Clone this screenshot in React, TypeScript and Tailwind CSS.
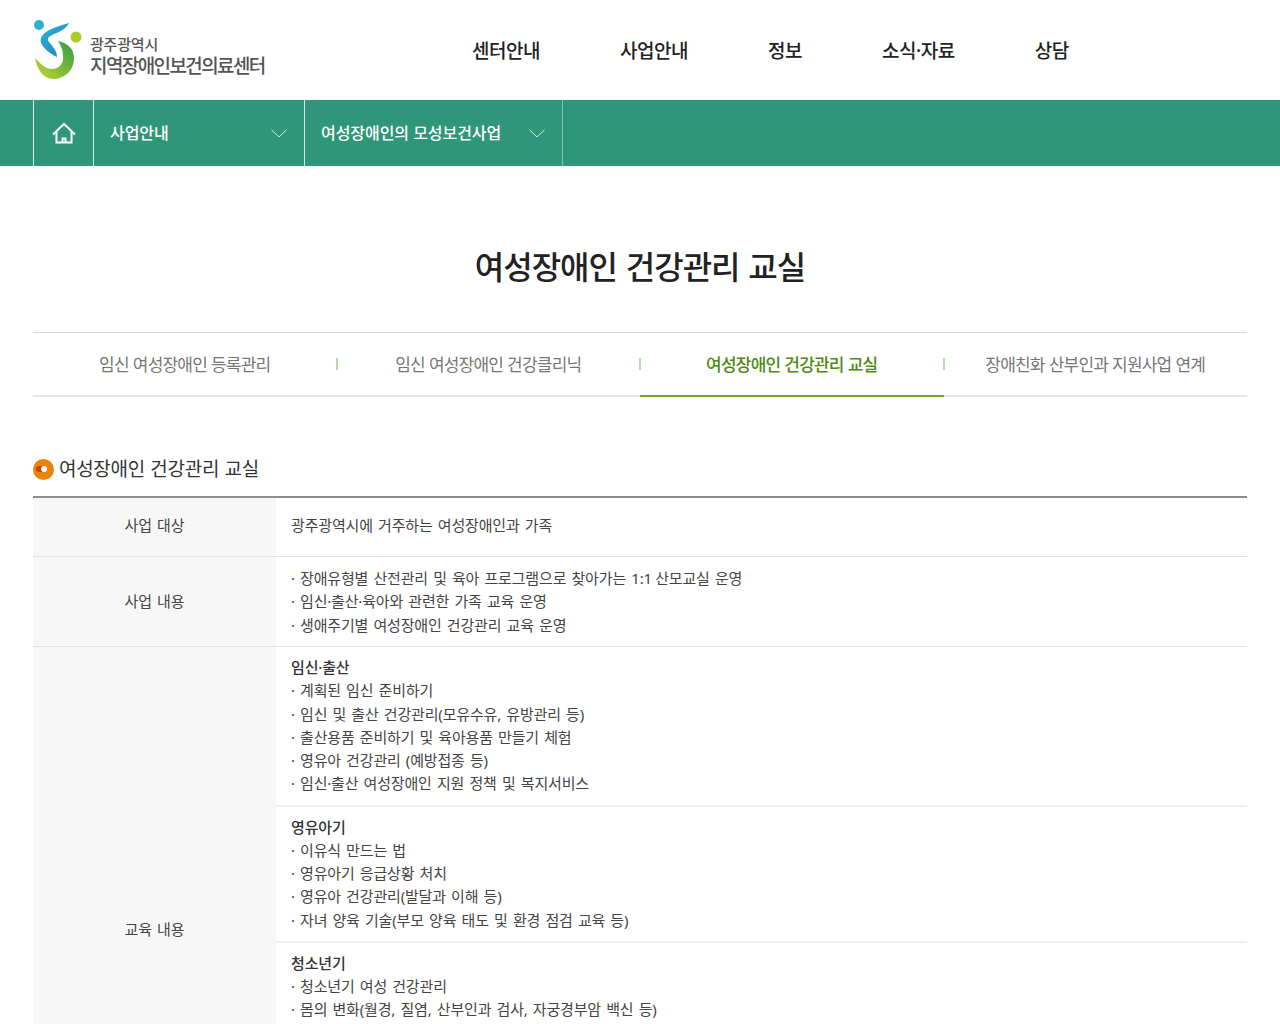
import type { ReactNode } from "react";

const FONT = "font-['Noto_Sans','Noto_Sans_CJK_KR',sans-serif]";

const MENU = ["센터안내", "사업안내", "정보", "소식·자료", "상담"];

const TABS = [
  { label: "임신 여성장애인 등록관리" },
  { label: "임신 여성장애인 건강클리닉" },
  { label: "여성장애인 건강관리 교실", active: true },
  { label: "장애친화 산부인과 지원사업 연계" },
];

const EDU = [
  {
    title: "임신·출산",
    items: [
      "계획된 임신 준비하기",
      "임신 및 출산 건강관리(모유수유, 유방관리 등)",
      "출산용품 준비하기 및 육아용품 만들기 체험",
      "영유아 건강관리 (예방접종 등)",
      "임신·출산 여성장애인 지원 정책 및 복지서비스",
    ],
  },
  {
    title: "영유아기",
    items: [
      "이유식 만드는 법",
      "영유아기 응급상황 처치",
      "영유아 건강관리(발달과 이해 등)",
      "자녀 양육 기술(부모 양육 태도 및 환경 점검 교육 등)",
    ],
  },
  {
    title: "청소년기",
    items: ["청소년기 여성 건강관리", "몸의 변화(월경, 질염, 산부인과 검사, 자궁경부암 백신 등)"],
  },
];

function Logo() {
  return (
    <svg width="50" height="62" viewBox="0 0 50 62" className="shrink-0">
      <defs>
        <linearGradient id="blue" x1="0" y1="0" x2="1" y2="1">
          <stop offset="0" stopColor="#2bb5d8" />
          <stop offset="1" stopColor="#1f7fc0" />
        </linearGradient>
        <linearGradient id="green" x1="1" y1="0" x2="0" y2="1">
          <stop offset="0" stopColor="#2f9a4a" />
          <stop offset="1" stopColor="#c4d92a" />
        </linearGradient>
      </defs>
      <circle cx="6" cy="6" r="5" fill="#2fb0d6" />
      <circle cx="43" cy="18" r="5.5" fill="#a8cc2c" />
      <path d="M36 4C26 7 11 11 8 19C6 25 12 30 17 34C20 36 22 37 24 38C24 31 19 27 16 23C14 20 15 18 19 16C26 13 33 10 36 4Z" fill="url(#blue)" />
      <path d="M25 22C35 24 41 30 41 39C41 52 31 60 20 60C10 60 4 50 2 39C7 44 12 50 19 50C26 50 31 44 30 37C30 31 28 27 25 22Z" fill="url(#green)" />
    </svg>
  );
}

function HomeIcon() {
  return (
    <svg width="24" height="22" viewBox="0 0 24 22" fill="none" stroke="#ffffff" strokeWidth="2" className="shrink-0">
      <path d="M1 12.5L12 2L23 12.5" />
      <path d="M4.5 10V20.5H19.5V10" />
      <path d="M10.5 20.5V16.5H13.5V20.5" />
    </svg>
  );
}

function Chevron() {
  return (
    <svg width="16" height="9" viewBox="0 0 16 9" fill="none" stroke="#ffffff" strokeWidth="0.9" className="shrink-0 opacity-90">
      <path d="M0.5 0.8L8 8L15.5 0.8" />
    </svg>
  );
}

function Bullet({ children }: { children: ReactNode }) {
  return (
    <div>
      <span className="inline-block w-[9px]">·</span>
      {children}
    </div>
  );
}

export default function App() {
  return (
    <div className={`h-[1024px] overflow-hidden bg-white ${FONT}`}>
      <header className="mx-auto flex h-[100px] w-[1214px] items-center">
        <div className="flex w-[415px] items-center pb-[1px]">
          <Logo />
          <div className="ml-[7px] mt-[16px] font-medium text-[#555]">
            <div className="text-[15px] leading-[18px] tracking-[-0.2px]">광주광역시</div>
            <div className="text-[19px] leading-[27px] tracking-[-1.6px]">지역장애인보건의료센터</div>
          </div>
        </div>
        <nav className="ml-[24px] flex gap-[80px] pt-[2px] text-[19px] font-medium tracking-[-0.48px] text-[#222]">
          {MENU.map((m) => (
            <a key={m}>{m}</a>
          ))}
        </nav>
      </header>

      <div className="h-[66px] bg-[#2f967a]">
        <div className="mx-auto flex h-full w-[1214px] text-[16px] font-medium tracking-[-0.05px] text-white">
          <div className="flex w-[61px] items-center justify-center border-x border-[#d5eae4]">
            <HomeIcon />
          </div>
          <div className="flex w-[211px] items-center justify-between border-r border-[#d5eae4] pl-[16px] pr-[17px]">
            사업안내
            <Chevron />
          </div>
          <div className="flex w-[258px] items-center justify-between border-r border-[#7fc4b0] pl-[16px] pr-[17px]">
            여성장애인의 모성보건사업
            <Chevron />
          </div>
        </div>
      </div>

      <main className="mx-auto w-[1214px]">
        <h1 className="mt-[77px] text-center text-[32px] leading-[48px] font-medium tracking-[-1px] [word-spacing:1.5px] text-[#222]">
          여성장애인 건강관리 교실
        </h1>

        <div className="mt-[41px] grid h-[65px] grid-cols-4 border-t border-[#d5d5d5] border-b-2 border-b-[#e8e8e8]">
          {TABS.map((t, i) => (
            <div
              key={t.label}
              className={`relative -mb-[2px] flex items-center justify-center text-[17px] tracking-[-0.8px] [word-spacing:0.4px] ${
                t.active ? "border-b-2 border-[#6ba42f] pt-[2px] font-medium text-[#4e8a10]" : "text-[#777]"
              }`}
            >
              {t.label}
              {i < 3 && <span className="absolute -right-px top-[25px] h-[12px] w-[2px] bg-[#b5dcab]" />}
            </div>
          ))}
        </div>

        <div className="mt-[57px] flex h-[30px] items-center gap-[5px]">
          <span className="flex h-[21px] w-[21px] items-center justify-center rounded-full bg-[#e8830c]">
            <span className="h-[6px] w-[6px] rounded-full bg-white shadow-[-3px_0_0_#d13f06,-5px_0_0_#d13f06]" />
          </span>
          <h2 className="text-[19px] tracking-[-0.3px] [word-spacing:0.8px] text-[#333]">여성장애인 건강관리 교실</h2>
        </div>

        <div className="mt-[12px] border-t-2 border-[#8c8c8c] text-[15px] leading-[23.25px] tracking-[-0.17px] [word-spacing:1.5px] text-[#444]">
          <div className="flex h-[59px] border-b border-[#e3e3e3]">
            <div className="flex w-[243px] shrink-0 items-center justify-center bg-[#f7f7f7] pb-[3px]">사업 대상</div>
            <div className="flex items-center pb-[3px] pl-[15px]">광주광역시에 거주하는 여성장애인과 가족</div>
          </div>
          <div className="flex h-[90px] border-b border-[#e3e3e3]">
            <div className="flex w-[243px] shrink-0 items-center justify-center bg-[#f7f7f7] pt-[1px]">사업 내용</div>
            <div className="pb-[10px] pl-[15px] pt-[10px]">
              <Bullet>
                장애유형별 산전관리 및 육아 프로그램으로 찾아가는 <span className="[word-spacing:-0.5px]">1:1 </span>
                산모교실 운영
              </Bullet>
              <Bullet>임신·출산·육아와 관련한 가족 교육 운영</Bullet>
              <Bullet>생애주기별 여성장애인 건강관리 교육 운영</Bullet>
            </div>
          </div>
          <div className="flex h-[568px]">
            <div className="flex w-[243px] shrink-0 items-center justify-center bg-[#f7f7f7] pb-[3px]">
              교육 내용
            </div>
            <div className="grow">
              {EDU.map((g) => (
                <div key={g.title} className="border-b-2 border-[#efefef] py-[9px] pl-[15px]">
                  <div className="font-medium text-[#333]">{g.title}</div>
                  {g.items.map((it) => (
                    <Bullet key={it}>{it}</Bullet>
                  ))}
                </div>
              ))}
            </div>
          </div>
        </div>
      </main>
    </div>
  );
}
